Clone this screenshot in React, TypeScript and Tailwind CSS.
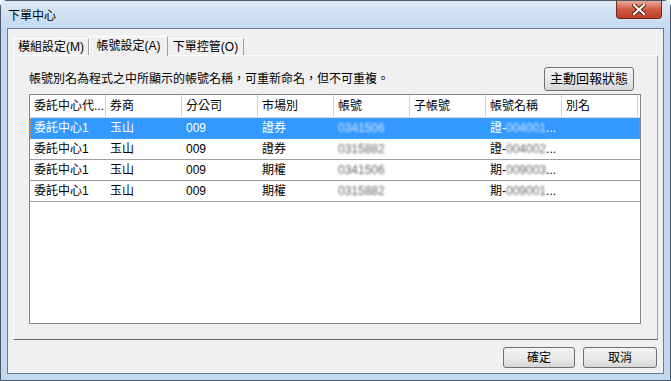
const font = "font-['Liberation_Sans','Noto_Sans_CJK_TC',sans-serif]";

const columns = ["委託中心代...", "券商", "分公司", "市場別", "帳號", "子帳號", "帳號名稱", "別名"];

type Row = {
  center: string;
  broker: string;
  branch: string;
  market: string;
  account: string;
  prefix: string;
  name: string;
};

const rows: Row[] = [
  { center: "委託中心1", broker: "玉山", branch: "009", market: "證券", account: "0341506", prefix: "證-", name: "004001" },
  { center: "委託中心1", broker: "玉山", branch: "009", market: "證券", account: "0315882", prefix: "證-", name: "004002" },
  { center: "委託中心1", broker: "玉山", branch: "009", market: "期權", account: "0341506", prefix: "期-", name: "009003" },
  { center: "委託中心1", broker: "玉山", branch: "009", market: "期權", account: "0315882", prefix: "期-", name: "009001" },
];

function WinButton({ label, className }: { label: string; className?: string }) {
  return (
    <button
      className={`flex items-center justify-center rounded-[3px] border border-[#707070] bg-gradient-to-b from-[#f2f2f2] via-[#ebebeb] to-[#d6d6d6] text-[12px] text-black ${className ?? ""}`}
    >
      {label}
    </button>
  );
}

function Cell({ children, selected }: { children?: React.ReactNode; selected?: boolean }) {
  return (
    <div
      className={`w-[76px] shrink-0 overflow-hidden whitespace-nowrap pl-[4px] ${selected ? "text-white" : "text-black"}`}
    >
      {children}
    </div>
  );
}

function Blur({ text, selected }: { text: string; selected?: boolean }) {
  return (
    <span className={`inline-block blur-[1.3px] ${selected ? "text-[#cfe2ff]" : "text-[#666666]"}`}>
      {text}
    </span>
  );
}

export default function App() {
  return (
    <div className={`${font} flex h-[381px] w-[671px] flex-col rounded-t-[7px] border border-[#4c5866] bg-[#c2d8f0]`}>
      {/* title bar */}
      <div className="flex h-[27px] items-start justify-between bg-gradient-to-b from-[#dbe8f6] to-[#c4d9f0] pl-[7px] pr-[8px]">
        <span className="mt-[6px] text-[12px] text-black">下單中心</span>
        <div className="flex h-[18px] w-[46px] items-center justify-center rounded-b-[4px] border border-t-0 border-[#6b2b20] bg-gradient-to-b from-[#e9a896] via-[#cf5a43] to-[#c33e27]">
          <svg width="14" height="11" viewBox="0 0 14 11">
            <path d="M2 1 L12 10 M12 1 L2 10" stroke="#4a1a12" strokeWidth="4" strokeLinecap="square" />
            <path d="M2 1 L12 10 M12 1 L2 10" stroke="#ffffff" strokeWidth="2.2" strokeLinecap="square" />
          </svg>
        </div>
      </div>

      {/* client area */}
      <div className="mx-[6px] mb-[6px] flex flex-1 flex-col border border-[#6a7a8c] bg-[#f0f0f0] px-[5px]">
        {/* tabs */}
        <div className="mt-[7px] flex items-end text-[12px] text-black">
          <div className="flex h-[17px] w-[76px] items-center justify-center border border-b-0 border-[#a0a0a0] border-t-white border-l-white bg-[#f0f0f0]">
            模組設定(M)
          </div>
          <div className="relative -mb-px flex h-[20px] w-[79px] items-center justify-center border border-b-0 border-[#a0a0a0] border-t-white border-l-white bg-[#f0f0f0] pb-[2px]">
            帳號設定(A)
          </div>
          <div className="flex h-[17px] w-[76px] items-center justify-center border border-b-0 border-l-0 border-[#a0a0a0] border-t-white bg-[#f0f0f0]">
            下單控管(O)
          </div>
        </div>

        {/* tab panel */}
        <div className="flex h-[285px] flex-col border border-t-white border-l-white border-r-[#a0a0a0] border-b-[#696969] bg-[#f0f0f0] pb-[15px] pl-[15px] pr-[16px] pt-[11px]">
          <div className="flex items-end justify-between pr-[7px]">
            <span className="mb-[3px] text-[12px] text-black">帳號別名為程式之中所顯示的帳號名稱，可重新命名，但不可重複。</span>
            <WinButton label="主動回報狀態" className="h-[24px] w-[90px] text-[13px]" />
          </div>

          {/* list view */}
          <div className="mt-[3px] flex flex-1 flex-col border border-[#828790] bg-white text-[12px]">
            <div className="flex h-[23px] items-center border-b border-[#d5d5d5] bg-white">
              {columns.map((c) => (
                <div
                  key={c}
                  className="flex h-full w-[76px] shrink-0 items-center overflow-hidden whitespace-nowrap border-r border-[#d5d5d5] pl-[4px] text-black"
                >
                  {c}
                </div>
              ))}
            </div>
            {rows.map((r, i) => {
              const sel = i === 0;
              return (
                <div
                  key={i}
                  className={`flex h-[21px] items-center border-b ${
                    sel
                      ? "border-[#3399ff] bg-[#3399ff] outline-1 outline-dotted -outline-offset-1 outline-[#d8893a]"
                      : "border-[#a0a0a0]"
                  }`}
                >
                  <Cell selected={sel}>{r.center}</Cell>
                  <Cell selected={sel}>{r.broker}</Cell>
                  <Cell selected={sel}>{r.branch}</Cell>
                  <Cell selected={sel}>{r.market}</Cell>
                  <Cell selected={sel}>
                    <Blur text={r.account} selected={sel} />
                  </Cell>
                  <Cell selected={sel} />
                  <Cell selected={sel}>
                    {r.prefix}
                    <Blur text={r.name} selected={sel} />
                    ...
                  </Cell>
                  <Cell selected={sel} />
                </div>
              );
            })}
          </div>
        </div>

        {/* footer buttons */}
        <div className="mt-[7px] flex justify-end gap-[8px] pr-[1px]">
          <WinButton label="確定" className="h-[21px] w-[72px] border-[#3c3c3c]" />
          <WinButton label="取消" className="h-[21px] w-[74px]" />
        </div>
      </div>
    </div>
  );
}
